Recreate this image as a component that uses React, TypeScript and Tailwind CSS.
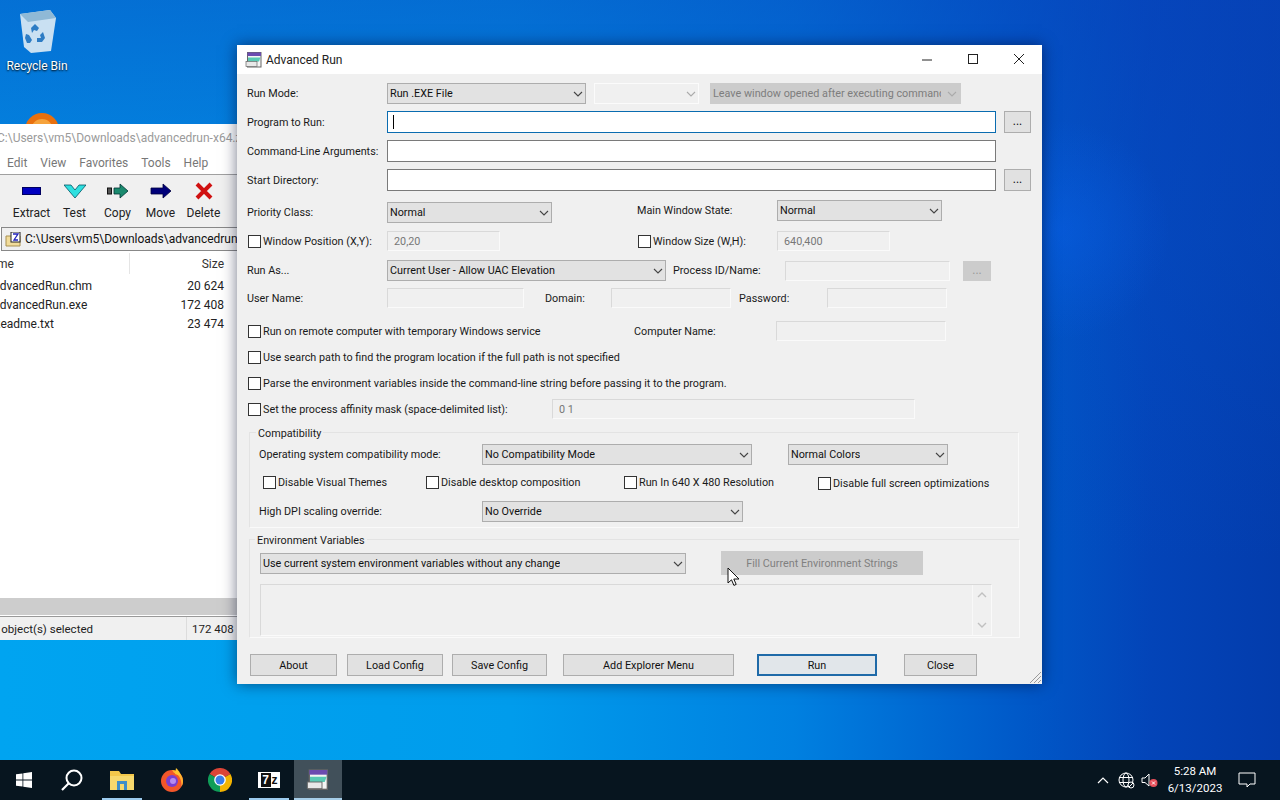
import React from "react";

const Chevron = ({ color = "#444" }: { color?: string }) => (
  <svg width="10" height="6" viewBox="0 0 10 6" className="shrink-0"><path d="M1 1l4 4 4-4" fill="none" stroke={color} strokeWidth="1.1" /></svg>
);

const Combo = ({ w, text, cls = "" }: { w: string; text: string; cls?: string }) => (
  <div className={`${w} h-[21px] shrink-0 flex items-center justify-between pl-[2px] bg-[#e2e2e2] border border-[#adadad] text-[#111] ${cls}`}>
    <span className="overflow-hidden whitespace-nowrap pt-[2px]">{text}</span>
    <span className="w-[14px] flex justify-center"><Chevron /></span>
  </div>
);

const Edit = ({ w, text = "", cls = "" }: { w: string; text?: string; cls?: string }) => (
  <div className={`${w} h-[20px] shrink-0 flex items-center pl-[6px] pt-[2px] bg-[#f0f0f0] border border-[#d9d9d9] border-b-[#fafafa] border-r-[#fafafa] text-[#777] ${cls}`}>{text}</div>
);

const TextBox = ({ bd = "border-[#7a7a7a]", children }: { bd?: string; children?: React.ReactNode }) => (
  <div className={`w-[609px] h-[22px] shrink-0 flex items-center pl-[5px] bg-white border ${bd}`}>{children}</div>
);

const Btn = ({ w, text, bd = "border border-[#adadad]", bg = "bg-[#e1e1e1]", cls = "pt-[2px]" }: { w: string; text: string; bd?: string; bg?: string; cls?: string }) => (
  <div className={`${w} h-[22px] shrink-0 flex items-center justify-center ${bg} ${bd} text-[#111] ${cls}`}>{text}</div>
);

const Check = ({ text, cls = "" }: { text: string; cls?: string }) => (
  <div className={`flex items-center gap-[2px] shrink-0 text-[#1a1a1a] ${cls}`}>
    <span className="w-[13px] h-[13px] bg-white border border-[#333] shrink-0" />
    <span className="whitespace-nowrap pt-[2px]">{text}</span>
  </div>
);

const Label = ({ w, text, cls = "" }: { w: string; text: string; cls?: string }) => (
  <span className={`${w} shrink-0 whitespace-nowrap pt-[2px] text-[#1a1a1a] ${cls}`}>{text}</span>
);

const AppIcon = ({ size = 18 }: { size?: number }) => (
  <svg width={size} height={size} viewBox="0 0 18 18">
    <rect x="2.500" y="1.500" width="13.500" height="14.500" fill="#f4f4f4" stroke="#666" />
    <rect x="2.500" y="1.500" width="13.500" height="3.500" fill="#6b4bb0" />
    <path d="M3 6.500h12.500l-1.500 4H3z" fill="#59c9b4" />
    <rect x="1" y="10.500" width="11" height="5" fill="#e8e8e8" stroke="#666" strokeWidth=".7" />
  </svg>
);

const ToolItem = ({ label, icon, w }: { label: string; icon: React.ReactNode; w: string }) => (
  <div className={`${w} shrink-0 flex flex-col items-center`}>
    <div className="h-[22px] flex items-center justify-center">{icon}</div>
    <span className="mt-[5px] text-[#222]">{label}</span>
  </div>
);

const FileRow = ({ name, size, ml }: { name: string; size: string; ml: string }) => (
  <div className="h-[19px] flex items-center justify-between pr-[13px] text-[#222]">
    <span className={ml}>{name}</span>
    <span>{size}</span>
  </div>
);

export default function App() {
  return (
    <div className="relative w-[1280px] h-[800px] overflow-hidden text-[12px] leading-none font-['Roboto',sans-serif] bg-[linear-gradient(90deg,#00a4f0_0%,#009cec_40%,#0080e0_62%,#0058c8_80%,#0344b8_90%,#033cac_100%)]">
      <div className="absolute inset-0 bg-[linear-gradient(to_bottom,rgba(8,70,190,.55)_0%,rgba(8,80,200,.3)_30%,rgba(0,170,245,0)_70%)]" />
      <div className="absolute inset-0 bg-[radial-gradient(circle_at_1060px_230px,rgba(10,100,240,.4)_0px,rgba(10,90,220,0)_110px)]" />

      {/* desktop icons */}
      <div className="absolute left-0 top-[8px] w-[74px] flex flex-col items-center text-white [text-shadow:0_1px_2px_#000]">
        <svg width="42" height="46" viewBox="0 0 42 46">
          <path d="M4 6l30-4 6 8-5 33-20 2-7-6z" fill="#d4e6f3" opacity=".95" />
          <path d="M4 6l30-4 6 8-28 4z" fill="#8fb9d6" />
          <path d="M15 20l4-4 4 4-2 3-3-1-2 3zM10 26l3 1 3 5-2 3h-3l-2-5zM27 24l2 6-3 4h-5v-4h4l-1-3z" fill="#2d7cc4" />
        </svg>
        <span className="mt-[6px]">Recycle Bin</span>
      </div>
      <div className="absolute left-[25px] top-[113px] w-[34px] h-[34px] rounded-full border-[6px] border-[#e8700f] bg-[#f6a33c]" />

      {/* 7-Zip window */}
      <div className="absolute left-0 top-[124px] w-[237px] h-[516px] overflow-hidden bg-white flex flex-col">
        <div className="h-[28px] shrink-0 flex items-center -ml-[3px] whitespace-nowrap text-[#9a9a9a]">C:\Users\vm5\Downloads\advancedrun-x64.zip</div>
        <div className="h-[23px] shrink-0 flex items-center gap-[13px] pl-[7px] text-[#777] border-b border-[#a0a0a0]">
          <span>Edit</span><span>View</span><span>Favorites</span><span>Tools</span><span>Help</span>
        </div>
        <div className="h-[52px] shrink-0 bg-[#f0f0f0] flex pt-[5px] pl-[10px]">
          <ToolItem w="w-[43px]" label="Extract" icon={<span className="block w-[19px] h-[8px] bg-[#0000c0] border border-[#000060]" />} />
          <ToolItem w="w-[43px]" label="Test" icon={<svg width="22" height="15" viewBox="0 0 22 15"><path d="M0 1h7l4 5 4-5h7l-11 13z" fill="#2ee0e0" stroke="#056" strokeWidth=".8" /></svg>} />
          <ToolItem w="w-[43px]" label="Copy" icon={<svg width="22" height="16" viewBox="0 0 22 16"><rect x=".5" y="5" width="4" height="6" fill="#555" stroke="#111" /><path d="M7 5h6V1l8 7-8 7v-4H7z" fill="#1a8a6e" stroke="#033" strokeWidth=".8" /></svg>} />
          <ToolItem w="w-[43px]" label="Move" icon={<svg width="22" height="16" viewBox="0 0 22 16"><path d="M1 5h12V1l8 7-8 7v-4H1z" fill="#00007a" stroke="#000040" strokeWidth=".8" /></svg>} />
          <ToolItem w="w-[43px]" label="Delete" icon={<svg width="18" height="18" viewBox="0 0 18 18"><path d="M2 2l14 14M16 2L2 16" stroke="#d01010" strokeWidth="4" /></svg>} />
        </div>
        <div className="h-[24px] shrink-0 bg-[#f0f0f0] border-y border-[#888] border-l border-l-[#888] ml-px flex items-center pl-[3px] gap-[4px] text-[#111] whitespace-nowrap">
          <svg width="16" height="15" viewBox="0 0 16 15" className="shrink-0"><path d="M1 4h14v10H1z" fill="#f2dc9a" stroke="#a89050" /><rect x="6" y="0" width="9" height="10" fill="#fff" stroke="#222" /><path d="M8 2h5l-4 6h4" fill="none" stroke="#2222bb" strokeWidth="1.3" /></svg>
          <span>C:\Users\vm5\Downloads\advancedrun-x64.zip\</span>
        </div>
        <div className="h-[25px] shrink-0 flex items-center text-[#333]">
          <span className="-ml-[18px] w-[147px]">Name</span>
          <span className="flex-1 h-[21px] border-l border-[#e5e5e5] flex items-center justify-end pr-[13px]">Size</span>
        </div>
        <div>
          <FileRow name="AdvancedRun.chm" size="20 624" ml="-ml-[8px]" />
          <FileRow name="AdvancedRun.exe" size="172 408" ml="-ml-[8px]" />
          <FileRow name="Readme.txt" size="23 474" ml="-ml-[7px]" />
        </div>
        <div className="flex-1" />
        <div className="h-[17px] shrink-0 bg-[#cdcdcd]" />
        <div className="h-[2px] shrink-0 bg-white border-b border-[#999]" />
        <div className="h-[23px] shrink-0 bg-[#f0f0f0] flex items-center justify-between text-[#222] text-[11.5px]">
          <span className="-ml-[8px] pt-[3px] whitespace-nowrap">1 object(s) selected</span>
          <span className="border-l border-[#dcdcdc] pl-[5px] pt-[3px] h-full flex items-center w-[51px] whitespace-nowrap">172 408</span>
        </div>
      </div>

      {/* Advanced Run dialog */}
      <div className="absolute left-[237px] top-[45px] w-[805px] h-[639px] bg-[#f0f0f0] text-[10.8px] shadow-[0_0_14px_rgba(0,10,40,.55)] flex flex-col">
        <div className="h-[29px] shrink-0 bg-white flex items-center pl-[8px] text-[#222]">
          <AppIcon />
          <span className="ml-[3px] text-[12px]">Advanced Run</span>
          <div className="ml-auto flex items-center text-[#111]">
            <svg width="46" height="29" viewBox="0 0 46 29"><path d="M18 15h10" stroke="#222" /></svg>
            <svg width="46" height="29" viewBox="0 0 46 29"><rect x="18.5" y="9.5" width="9" height="9" fill="none" stroke="#222" /></svg>
            <svg width="46" height="29" viewBox="0 0 46 29"><path d="M18 9l10 10M28 9L18 19" stroke="#222" /></svg>
          </div>
        </div>

        <div className="flex-1 flex flex-col pl-[10px] pt-[9px]">
          <div className="flex items-center h-[21px]">
            <Label w="w-[140px]" text="Run Mode:" />
            <Combo w="w-[199px]" text="Run .EXE File" />
            <div className="ml-[8px] w-[105px] h-[21px] shrink-0 flex items-center justify-end bg-[#f0f0f0] border border-[#fbfbfb]"><span className="w-[14px] flex justify-center"><Chevron color="#aaa" /></span></div>
            <div className="ml-[11px] w-[251px] h-[21px] shrink-0 flex items-center justify-between pl-[3px] pr-[2px] bg-[#cccccc] text-[#7d7d7d]">
              <span className="w-[228px] pt-[2px] overflow-hidden whitespace-nowrap">Leave window opened after executing command</span>
              <span className="w-[14px] flex justify-center shrink-0"><Chevron color="#aaa" /></span>
            </div>
          </div>
          <div className="flex items-center h-[22px] mt-[7px]">
            <Label w="w-[140px]" text="Program to Run:" />
            <TextBox bd="border-[#0a6cb0]"><span className="w-px h-[14px] bg-black" /></TextBox>
            <Btn w="w-[27px]" text="..." cls="ml-[8px] pb-[2px] text-[12px]" />
          </div>
          <div className="flex items-center h-[22px] mt-[7px]">
            <Label w="w-[140px]" text="Command-Line Arguments:" />
            <TextBox />
          </div>
          <div className="flex items-center h-[22px] mt-[7px]">
            <Label w="w-[140px]" text="Start Directory:" />
            <TextBox />
            <Btn w="w-[27px]" text="..." cls="ml-[8px] pb-[2px] text-[12px]" />
          </div>
          <div className="flex items-start h-[23px] mt-[9px]">
            <div className="flex items-center h-[23px] pt-[2px]">
              <Label w="w-[140px]" text="Priority Class:" />
              <Combo w="w-[165px]" text="Normal" />
            </div>
            <div className="flex items-center h-[21px]">
              <Label w="w-[140px]" text="Main Window State:" cls="ml-[85px]" />
              <Combo w="w-[165px]" text="Normal" />
            </div>
          </div>
          <div className="flex items-center h-[20px] mt-[8px]">
            <div className="w-[140px] shrink-0"><Check text="Window Position (X,Y):" cls="ml-px" /></div>
            <Edit w="w-[113px]" text="20,20" />
            <div className="w-[140px] shrink-0 ml-[137px] -mr-[2px] pl-[1px]"><Check text="Window Size (W,H):" /></div>
            <Edit w="w-[113px]" text="640,400" cls="ml-[2px]" />
          </div>
          <div className="flex items-center h-[21px] mt-[9px]">
            <Label w="w-[140px]" text="Run As..." />
            <Combo w="w-[279px]" text="Current User - Allow UAC Elevation" />
            <Label w="w-[112px]" text="Process ID/Name:" cls="ml-[7px]" />
            <Edit w="w-[165px]" />
            <div className="ml-[13px] w-[28px] h-[20px] shrink-0 flex items-center justify-center pb-[2px] bg-[#cccccc] text-[#999] text-[12px]">...</div>
          </div>
          <div className="flex items-center h-[20px] mt-[7px]">
            <Label w="w-[140px]" text="User Name:" />
            <Edit w="w-[137px]" />
            <Label w="w-[66px]" text="Domain:" cls="ml-[21px]" />
            <Edit w="w-[120px]" />
            <Label w="w-[88px]" text="Password:" cls="ml-[8px]" />
            <Edit w="w-[120px]" />
          </div>
          <div className="flex items-center h-[20px] mt-[13px]">
            <div className="w-[387px] shrink-0"><Check text="Run on remote computer with temporary Windows service" cls="ml-px" /></div>
            <Label w="w-[142px]" text="Computer Name:" />
            <Edit w="w-[170px]" />
          </div>
          <div className="flex items-center h-[20px] mt-[6px]"><Check text="Use search path to find the program location if the full path is not specified" cls="ml-px" /></div>
          <div className="flex items-center h-[20px] mt-[6px]"><Check text="Parse the environment variables inside the command-line string before passing it to the program." cls="ml-px" /></div>
          <div className="flex items-center h-[20px] mt-[6px]">
            <div className="w-[305px] shrink-0"><Check text="Set the process affinity mask (space-delimited list):" cls="ml-px" /></div>
            <Edit w="w-[363px]" text="0 1" />
          </div>

          {/* Compatibility */}
          <div className="relative ml-[2px] mt-[13px] w-[770px] h-[96px] border border-[#e3e3e3] border-b-[#fafafa] border-r-[#fafafa] pl-[9px] pt-[11px] flex flex-col">
            <span className="absolute left-[6px] -top-[4px] text-[#1a1a1a] bg-[#f0f0f0] px-[2px]">Compatibility</span>
            <div className="flex items-center h-[21px]">
              <Label w="w-[223px]" text="Operating system compatibility mode:" />
              <Combo w="w-[270px]" text="No Compatibility Mode" />
              <Combo w="w-[160px]" text="Normal Colors" cls="ml-[36px]" />
            </div>
            <div className="flex items-center h-[20px] mt-[7px]">
              <Check text="Disable Visual Themes" cls="ml-[4px] w-[163px]" />
              <Check text="Disable desktop composition" cls="w-[198px]" />
              <Check text="Run In 640 X 480 Resolution" cls="w-[194px]" />
              <Check text="Disable full screen optimizations" cls="mt-[3px]" />
            </div>
            <div className="flex items-center h-[21px] mt-[9px]">
              <Label w="w-[223px]" text="High DPI scaling override:" />
              <Combo w="w-[261px]" text="No Override" />
            </div>
          </div>

          {/* Environment */}
          <div className="relative ml-[2px] mt-[11px] w-[771px] h-[99px] border border-[#e3e3e3] border-b-[#fafafa] border-r-[#fafafa] pl-[10px] pt-[12px] flex flex-col">
            <span className="absolute left-[5px] -top-[4px] text-[#1a1a1a] bg-[#f0f0f0] px-[2px]">Environment Variables</span>
            <div className="flex items-start h-[24px]">
              <Combo w="w-[426px]" text="Use current system environment variables without any change" cls="mt-px" />
              <div className="ml-[35px] -mt-px w-[202px] h-[24px] shrink-0 flex items-center justify-center pt-[2px] bg-[#cccccc] text-[#808080]">Fill Current Environment Strings</div>
            </div>
            <div className="mt-[8px] w-[732px] h-[52px] flex justify-end bg-[#f0f0f0] border border-[#d9d9d9] border-b-[#fafafa] border-r-[#fafafa]">
              <div className="w-[18px] mr-px flex flex-col items-center justify-between py-[7px] border-l border-[#f8f8f8]">
                <svg width="10" height="6" viewBox="0 0 10 6"><path d="M1 5l4-4 4 4" fill="none" stroke="#c0c0c0" strokeWidth="1.4" /></svg>
                <svg width="10" height="6" viewBox="0 0 10 6"><path d="M1 1l4 4 4-4" fill="none" stroke="#c0c0c0" strokeWidth="1.4" /></svg>
              </div>
            </div>
          </div>

          {/* Bottom buttons */}
          <div className="flex items-center h-[22px] mt-[16px] ml-[3px]">
            <Btn w="w-[87px]" text="About" />
            <Btn w="w-[96px]" text="Load Config" cls="ml-[10px] pt-[2px]" />
            <Btn w="w-[95px]" text="Save Config" cls="ml-[9px] pt-[2px]" />
            <Btn w="w-[171px]" text="Add Explorer Menu" cls="ml-[16px] pt-[2px]" />
            <Btn w="w-[120px]" text="Run" bd="border-2 border-[#1f6aa8]" bg="bg-[#e1e6ea]" cls="ml-[23px] pt-[2px]" />
            <Btn w="w-[73px]" text="Close" cls="ml-[27px] pt-[2px]" />
          </div>
        </div>

        <svg width="14" height="14" viewBox="0 0 14 14" className="absolute right-0 bottom-0"><path d="M13 2L2 13M13 6L6 13M13 10l-3 3" stroke="#9a9a9a" strokeWidth="1" /></svg>
      </div>

      {/* cursor */}
      <svg width="13" height="20" viewBox="0 0 13 20" className="absolute left-[727px] top-[567px]">
        <path d="M1 1v15l3.5-3.2 2.4 5.6 2.3-1-2.4-5.4H12z" fill="#fff" stroke="#111" strokeWidth="1" />
      </svg>

      {/* taskbar */}
      <div className="absolute left-0 right-0 bottom-0 h-[40px] bg-[#07151f] flex items-stretch text-white">
        <div className="w-[48px] flex items-center justify-center">
          <svg width="16" height="16" viewBox="0 0 16 16"><path d="M0 2.300l6.500-.9v6.200H0zM7.300 1.300L16 0v7.600H7.300zM0 8.400h6.500v6.200L0 13.700zM7.300 8.400H16V16l-8.700-1.300z" fill="#fff" /></svg>
        </div>
        <div className="w-[48px] flex items-center justify-center">
          <svg width="24" height="24" viewBox="0 0 24 24"><circle cx="14" cy="10" r="7.500" fill="none" stroke="#fff" strokeWidth="2" /><path d="M8.500 15.500L2 22" stroke="#fff" strokeWidth="2.200" /></svg>
        </div>
        <div className="relative w-[51px] flex items-center justify-center">
          <svg width="24" height="20" viewBox="0 0 24 20"><path d="M0 1h9l2 3h13v16H0z" fill="#f3c84b" /><path d="M0 6h24v14H0z" fill="#f7d96d" /><rect x="7" y="11" width="10" height="9" fill="#3f8fc9" /><rect x="10" y="14" width="4" height="6" fill="#f7d96d" /></svg>
          <span className="absolute bottom-0 left-[6px] right-[5px] h-[2px] bg-[#9ccbee]" />
        </div>
        <div className="w-[49px] flex items-center justify-center">
          <svg width="24" height="24" viewBox="0 0 24 24"><circle cx="12" cy="13" r="11" fill="#f2562a" /><path d="M12 2c6 0 11 5 11 11 0 2-.5 4-1.500 5.500C22 12 19 6 14 5z" fill="#ffb02e" /><path d="M16 0c2 2 4 4 5 8l-6-2z" fill="#ffc531" /><circle cx="12" cy="13" r="6" fill="#7a3fd0" /><circle cx="13" cy="13" r="3" fill="#b68cf0" /></svg>
        </div>
        <div className="w-[48px] flex items-center justify-center">
          <svg width="24" height="24" viewBox="0 0 24 24"><path d="M12 12L1.600 6A12 12 0 0 1 22.400 6z" fill="#db4437" /><path d="M12 12l10.400-6A12 12 0 0 1 12 24z" fill="#f4b400" /><path d="M12 12v12A12 12 0 0 1 1.600 6z" fill="#0f9d58" /><circle cx="12" cy="12" r="5.800" fill="#fff" /><circle cx="12" cy="12" r="4.500" fill="#3a7de8" /></svg>
        </div>
        <div className="relative w-[50px] flex items-center justify-center">
          <div className="w-[22px] h-[16px] bg-white flex items-center justify-center gap-px">
            <span className="bg-[#111] text-white w-[10px] h-[14px] flex items-center justify-center font-bold text-[12px] font-['Liberation_Sans',sans-serif]">7</span>
            <span className="text-[#111] font-bold text-[12px] font-['Liberation_Sans',sans-serif]">z</span>
          </div>
          <span className="absolute bottom-0 left-[5px] right-[5px] h-[2px] bg-[#9ccbee]" />
        </div>
        <div className="relative w-[48px] flex items-center justify-center bg-[#41505a]">
          <AppIcon size={24} />
          <span className="absolute bottom-0 left-0 right-0 h-[2px] bg-[#a5cde8]" />
        </div>
        <div className="flex-1" />
        <div className="w-[22px] flex items-center justify-center">
          <svg width="12" height="7" viewBox="0 0 12 7"><path d="M1 6l5-5 5 5" fill="none" stroke="#fff" strokeWidth="1.200" /></svg>
        </div>
        <div className="w-[24px] flex items-center justify-center">
          <svg width="17" height="17" viewBox="0 0 17 17" fill="none" stroke="#fff" strokeWidth="1"><circle cx="8" cy="8" r="7" /><ellipse cx="8" cy="8" rx="3" ry="7" /><path d="M1 5.500h14M1 10.500h14" /><circle cx="13" cy="13" r="3" fill="#07151f" /><path d="M11 15l4-4" /></svg>
        </div>
        <div className="w-[22px] flex items-center justify-center">
          <svg width="17" height="15" viewBox="0 0 17 15"><path d="M1 5h3l4-4v12L4 9.500H1z" fill="none" stroke="#fff" /><circle cx="12.500" cy="10" r="4" fill="#e8505b" /><path d="M11 8.500l3 3M14 8.500l-3 3" stroke="#fff" /></svg>
        </div>
        <div className="w-[64px] pl-[6px] flex flex-col items-center justify-center gap-[6px] text-[11.5px]">
          <span className="whitespace-nowrap">5:28 AM</span>
          <span className="whitespace-nowrap">6/13/2023</span>
        </div>
        <div className="w-[46px] flex items-center justify-center">
          <svg width="18" height="16" viewBox="0 0 18 16"><path d="M1 1h16v11h-5l-3 3v-3H1z" fill="none" stroke="#fff" /></svg>
        </div>
        <div className="w-[10px]" />
      </div>
    </div>
  );
}
